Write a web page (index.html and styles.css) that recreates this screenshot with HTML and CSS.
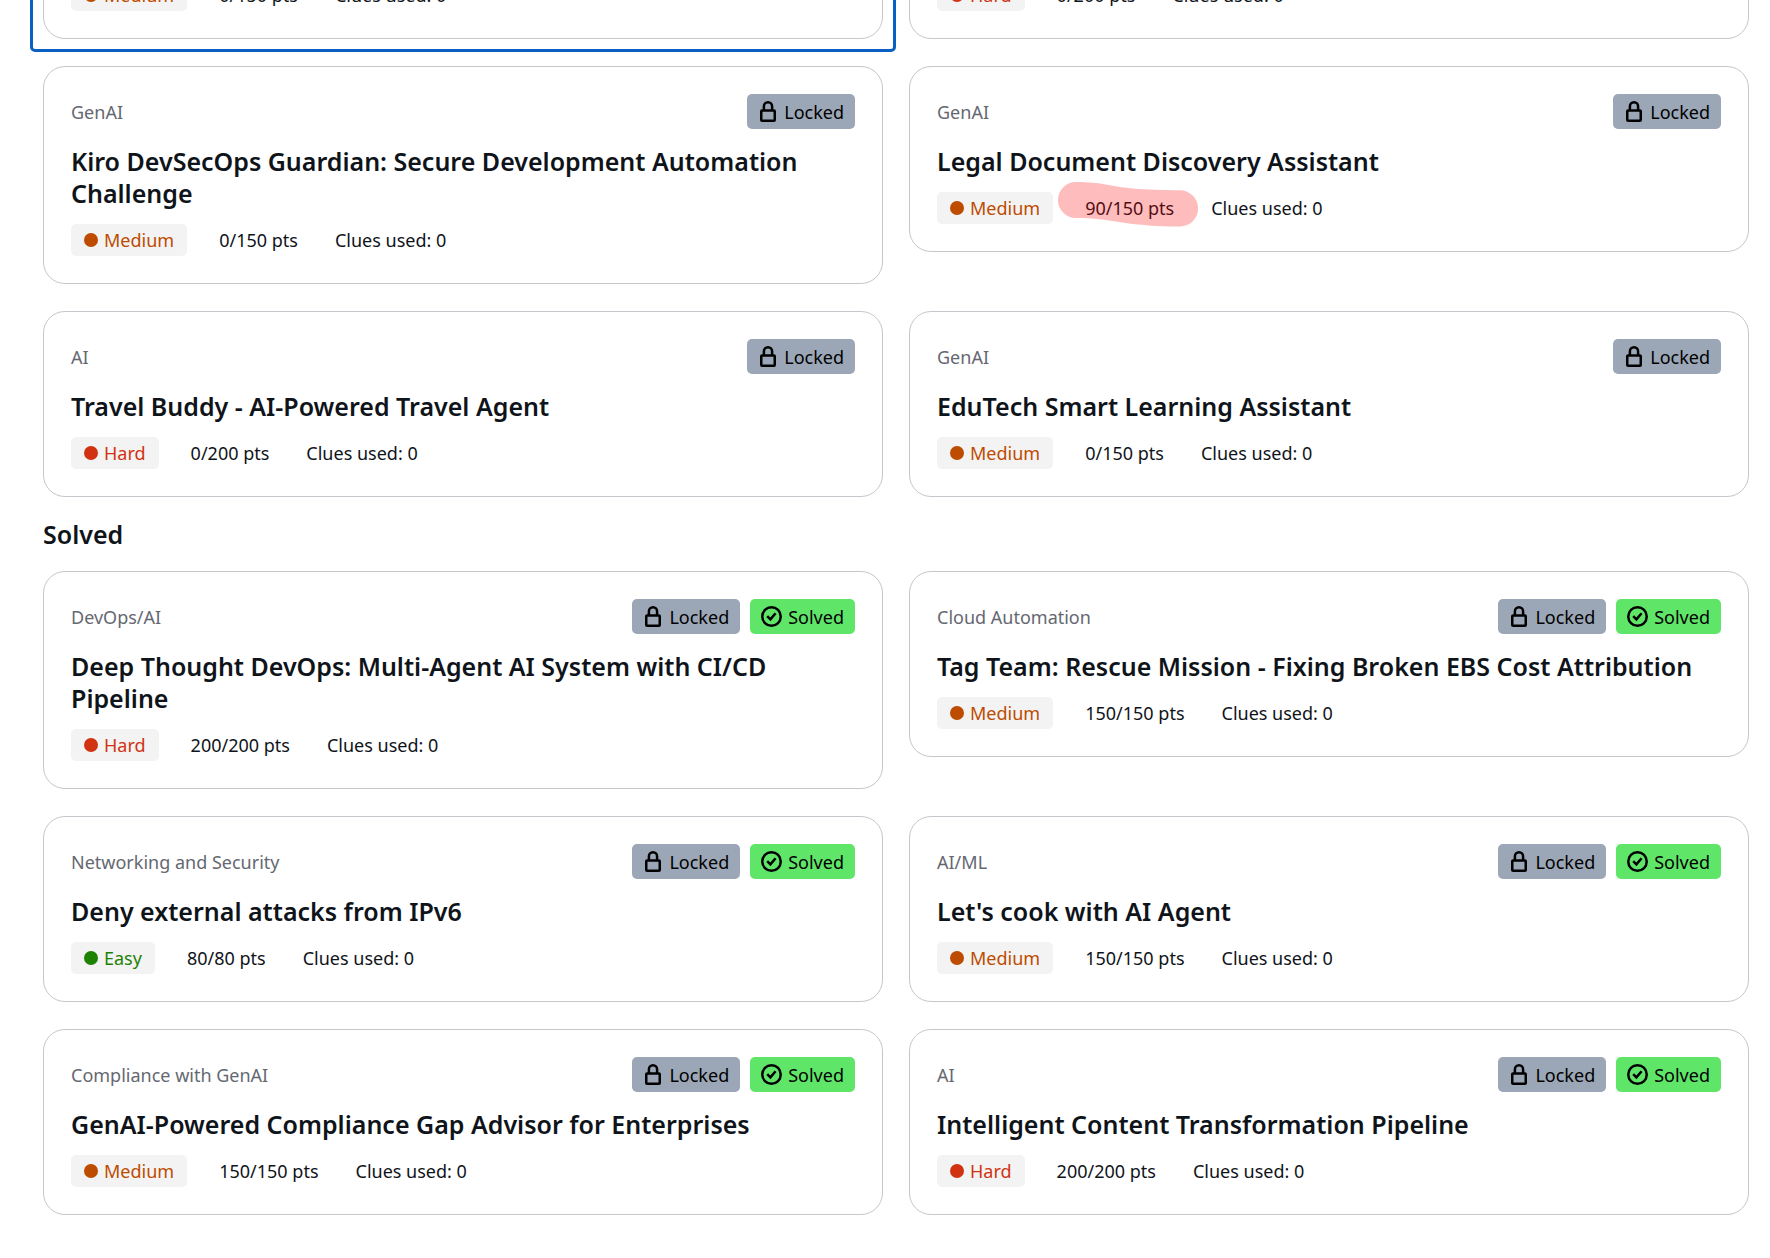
FILE: index.html
```html
<!DOCTYPE html>
<html lang="en">
  <head>
    <meta charset="utf-8">
    <title>Challenges</title>
    <meta name="viewport" content="width=device-width, initial-scale=1">
    <link rel="stylesheet" href="styles.css">
  </head>
  <body>
    <svg class="sprite" aria-hidden="true">
      <symbol id="icon-lock" viewBox="0 0 16 21">
        <rect x="1.25" y="9.5" width="13.5" height="10.25" rx="0.8" fill="none" stroke="currentColor" stroke-width="2.5"/>
        <path d="M3.9 9.5V5.4a4.1 4.1 0 0 1 8.2 0v4.1" fill="none" stroke="currentColor" stroke-width="2.5"/>
      </symbol>
      <symbol id="icon-check" viewBox="0 0 21 21">
        <circle cx="10.5" cy="10.5" r="9.25" fill="none" stroke="currentColor" stroke-width="2.5"/>
        <path d="M6.2 10.2l3.2 3.2 5.2-6.2" fill="none" stroke="currentColor" stroke-width="2.5"/>
      </symbol>
    </svg>
    <main class="challenges">
      <section class="cards cards-scrolled">
        <article class="card focused">
          <div class="meta">
            <span class="level medium">Medium</span>
            <span class="points">0/150 pts</span>
            <span>Clues used: 0</span>
          </div>
        </article>
        <article class="card">
          <div class="meta">
            <span class="level hard">Hard</span>
            <span class="points">0/200 pts</span>
            <span>Clues used: 0</span>
          </div>
        </article>
        <article class="card">
          <header class="card-top">
            <span class="category">GenAI</span>
            <span class="badge locked"><svg><use href="#icon-lock"/></svg>Locked</span>
          </header>
          <h3>Kiro DevSecOps Guardian: Secure Development Automation Challenge</h3>
          <div class="meta">
            <span class="level medium">Medium</span>
            <span class="points">0/150 pts</span>
            <span>Clues used: 0</span>
          </div>
        </article>
        <article class="card">
          <header class="card-top">
            <span class="category">GenAI</span>
            <span class="badge locked"><svg><use href="#icon-lock"/></svg>Locked</span>
          </header>
          <h3>Legal Document Discovery Assistant</h3>
          <div class="meta">
            <span class="level medium">Medium</span>
            <span class="points marked">90/150 pts
              <svg class="marker" viewBox="0 0 140 45" aria-hidden="true">
                <path d="M18 0C42 0 52 4 70 6C90 8 105 8 122 8.3A18 18 0 0 1 122 44.5C98 44.5 82 43 64 40.5C48 38 36 36 18 36A18 18 0 0 1 18 0Z"/>
              </svg>
            </span>
            <span>Clues used: 0</span>
          </div>
        </article>
        <article class="card">
          <header class="card-top">
            <span class="category">AI</span>
            <span class="badge locked"><svg><use href="#icon-lock"/></svg>Locked</span>
          </header>
          <h3>Travel Buddy - AI-Powered Travel Agent</h3>
          <div class="meta">
            <span class="level hard">Hard</span>
            <span class="points">0/200 pts</span>
            <span>Clues used: 0</span>
          </div>
        </article>
        <article class="card">
          <header class="card-top">
            <span class="category">GenAI</span>
            <span class="badge locked"><svg><use href="#icon-lock"/></svg>Locked</span>
          </header>
          <h3>EduTech Smart Learning Assistant</h3>
          <div class="meta">
            <span class="level medium">Medium</span>
            <span class="points">0/150 pts</span>
            <span>Clues used: 0</span>
          </div>
        </article>
      </section>

      <h2>Solved</h2>
      <section class="cards">
        <article class="card">
          <header class="card-top">
            <span class="category">DevOps/AI</span>
            <span class="badge locked"><svg><use href="#icon-lock"/></svg>Locked</span>
            <span class="badge solved"><svg><use href="#icon-check"/></svg>Solved</span>
          </header>
          <h3>Deep Thought DevOps: Multi-Agent AI System with CI/CD Pipeline</h3>
          <div class="meta">
            <span class="level hard">Hard</span>
            <span class="points">200/200 pts</span>
            <span>Clues used: 0</span>
          </div>
        </article>
        <article class="card">
          <header class="card-top">
            <span class="category">Cloud Automation</span>
            <span class="badge locked"><svg><use href="#icon-lock"/></svg>Locked</span>
            <span class="badge solved"><svg><use href="#icon-check"/></svg>Solved</span>
          </header>
          <h3>Tag Team: Rescue Mission - Fixing Broken EBS Cost Attribution</h3>
          <div class="meta">
            <span class="level medium">Medium</span>
            <span class="points">150/150 pts</span>
            <span>Clues used: 0</span>
          </div>
        </article>
        <article class="card">
          <header class="card-top">
            <span class="category">Networking and Security</span>
            <span class="badge locked"><svg><use href="#icon-lock"/></svg>Locked</span>
            <span class="badge solved"><svg><use href="#icon-check"/></svg>Solved</span>
          </header>
          <h3>Deny external attacks from IPv6</h3>
          <div class="meta">
            <span class="level easy">Easy</span>
            <span class="points">80/80 pts</span>
            <span>Clues used: 0</span>
          </div>
        </article>
        <article class="card">
          <header class="card-top">
            <span class="category">AI/ML</span>
            <span class="badge locked"><svg><use href="#icon-lock"/></svg>Locked</span>
            <span class="badge solved"><svg><use href="#icon-check"/></svg>Solved</span>
          </header>
          <h3>Let's cook with AI Agent</h3>
          <div class="meta">
            <span class="level medium">Medium</span>
            <span class="points">150/150 pts</span>
            <span>Clues used: 0</span>
          </div>
        </article>
        <article class="card">
          <header class="card-top">
            <span class="category">Compliance with GenAI</span>
            <span class="badge locked"><svg><use href="#icon-lock"/></svg>Locked</span>
            <span class="badge solved"><svg><use href="#icon-check"/></svg>Solved</span>
          </header>
          <h3>GenAI-Powered Compliance Gap Advisor for Enterprises</h3>
          <div class="meta">
            <span class="level medium">Medium</span>
            <span class="points">150/150 pts</span>
            <span>Clues used: 0</span>
          </div>
        </article>
        <article class="card">
          <header class="card-top">
            <span class="category">AI</span>
            <span class="badge locked"><svg><use href="#icon-lock"/></svg>Locked</span>
            <span class="badge solved"><svg><use href="#icon-check"/></svg>Solved</span>
          </header>
          <h3>Intelligent Content Transformation Pipeline</h3>
          <div class="meta">
            <span class="level hard">Hard</span>
            <span class="points">200/200 pts</span>
            <span>Clues used: 0</span>
          </div>
        </article>
      </section>
    </main>
  </body>
</html>
```
FILE: styles.css
```css
* {
  box-sizing: border-box;
}
body {
  margin: 0;
  background: #fff;
  color: #0f141a;
  font-family: "Noto Sans", "Open Sans", sans-serif;
  font-size: 18px;
  line-height: 32px;
  overflow-x: hidden;
}
.sprite {
  display: none;
}
.challenges {
  display: flow-root;
  padding: 0 21px 43px 43px;
}
h2, h3 {
  font-size: 25px;
  font-weight: 600;
  line-height: 32px;
}
h2 {
  margin: 21px 0;
}
h3 {
  margin: 16px 0 15px;
}
.cards {
  display: grid;
  grid-template-columns: 1fr 1fr;
  align-items: start;
  gap: 27px 26px;
}
/* the first row is scrolled partly out of view */
.cards-scrolled {
  margin-top: -49px;
}
.card {
  position: relative;
  padding: 27px;
  border: 1px solid #c6c6cd;
  border-radius: 22px;
}
.focused::after {
  content: "";
  position: absolute;
  inset: -14px;
  border: 3px solid #0a5fc2;
  border-radius: 5px;
}
.card-top {
  display: flex;
  align-items: center;
  gap: 10px;
}
.category {
  flex: 1;
  color: #656871;
}
.badge {
  display: flex;
  align-items: center;
  height: 35px;
  border-radius: 5px;
  color: #000;
}
.badge svg {
  height: 21px;
}
.locked {
  gap: 8px;
  padding: 0 11px 0 13px;
  background: #9ba7b6;
}
.locked svg {
  width: 16px;
}
.solved {
  gap: 6px;
  padding: 0 11px;
  background: #5fe669;
}
.solved svg {
  width: 21px;
}
.meta {
  display: flex;
  gap: 32px;
}
.points {
  padding-right: 5px;
}
.level {
  display: flex;
  align-items: center;
  gap: 6px;
  padding: 0 13px;
  border-radius: 5px;
  background: #f3f3f3;
}
.level::before {
  content: "";
  width: 14px;
  height: 14px;
  border-radius: 50%;
  background: currentColor;
}
.easy {
  color: #1d8102;
}
.medium {
  color: #bd4b00;
}
.hard {
  color: #d13212;
}
.marked {
  position: relative;
}
.marker {
  position: absolute;
  top: -10px;
  left: -27px;
  width: 140px;
  height: 45px;
  fill: #ff0000;
  opacity: 0.26;
}
```
